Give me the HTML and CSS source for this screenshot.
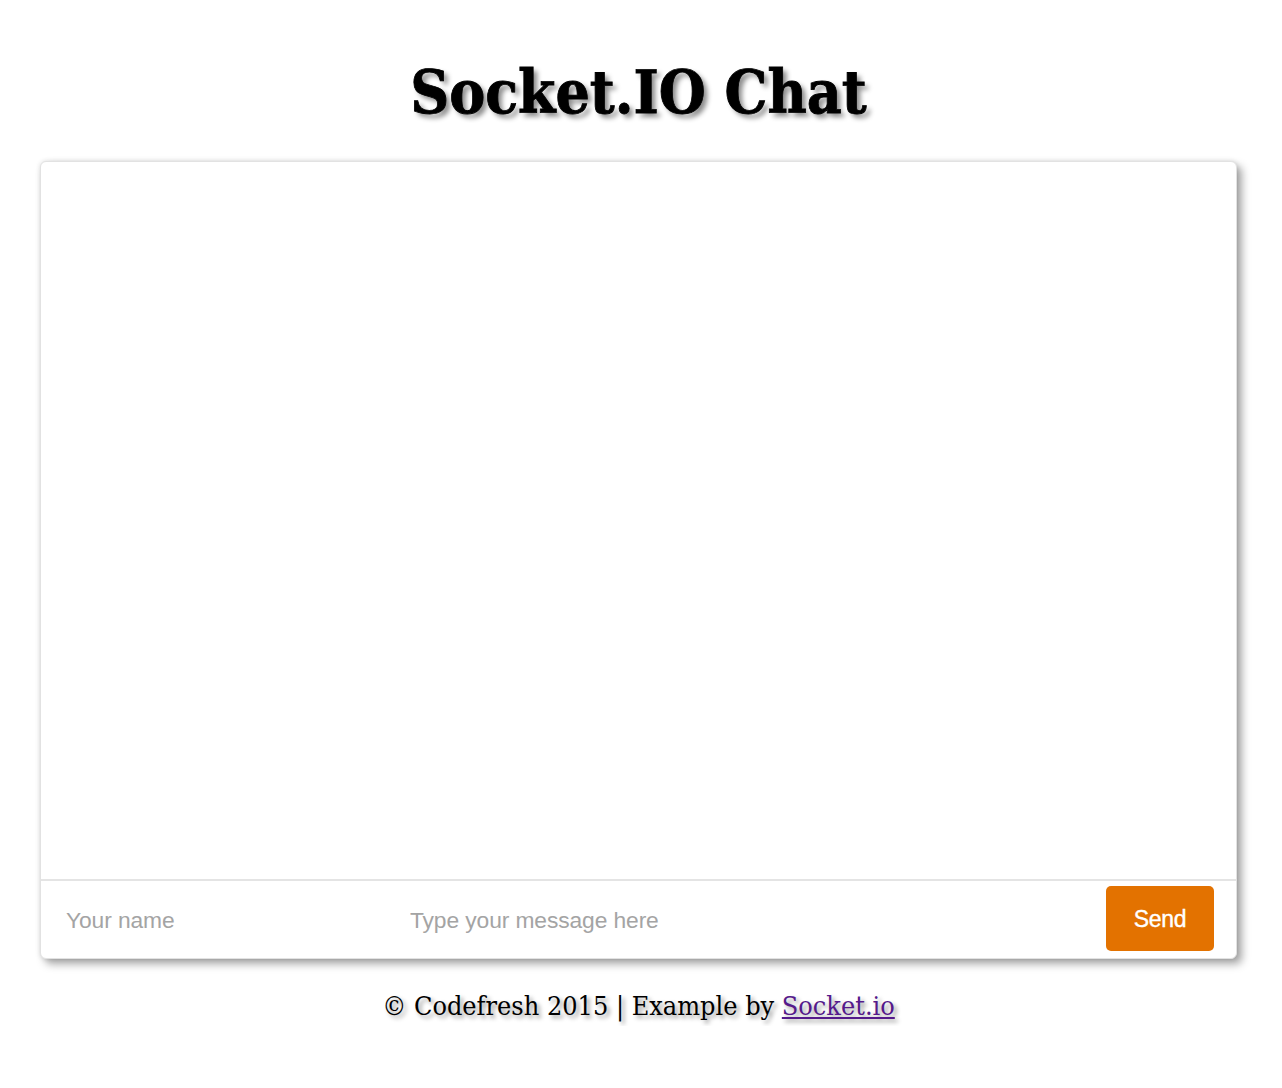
FILE: index.html
```html
<!DOCTYPE html>
<html>
<head>
<meta charset="utf-8">
<title>Socket.IO Chat</title>
<link rel="stylesheet" href="styles.css">
</head>
<body>
<h1 class="title">Socket.IO Chat</h1>
<div class="chat">
  <div class="messages"></div>
  <form class="composer">
    <input class="name" type="text" placeholder="Your name">
    <input class="message" type="text" placeholder="Type your message here">
    <button class="send" type="button">Send</button>
  </form>
</div>
<p class="footer">© Codefresh 2015 | Example by <a href="#">Socket.io</a></p>
</body>
</html>
```
FILE: styles.css
```css
html, body {
  margin: 0;
  padding: 0;
  background: #fff;
}
body {
  padding: 0 45px 0 40px;
  font-family: "Liberation Sans", Arial, sans-serif;
}
.title {
  margin: 0;
  padding-top: 60px;
  height: 105px;
  box-sizing: border-box;
  text-align: center;
  font-family: "DejaVu Serif Condensed", "DejaVu Serif", serif;
  font-weight: bold;
  font-size: 60px;
  line-height: 64px;
  color: #000;
  -webkit-text-stroke: 0.8px #000;
  text-shadow: 4px 4px 5px rgba(0,0,0,0.45);
}
.chat {
  margin-top: 56px;
  height: 798px;
  border: 1px solid #e2e2e2;
  border-radius: 6px;
  box-shadow: 0 0 5px rgba(0,0,0,0.12), 5px 5px 8px rgba(0,0,0,0.35);
  display: flex;
  flex-direction: column;
  box-sizing: border-box;
  background: #fff;
}
.messages {
  flex: 1;
}
.composer {
  margin: 0;
  height: 79px;
  border-top: 2px solid #e4e4e4;
  display: flex;
  align-items: center;
  padding: 0 22px 0 25px;
  box-sizing: border-box;
}
.composer input {
  border: none;
  outline: none;
  background: transparent;
  font-family: "Liberation Sans", Arial, sans-serif;
  font-size: 22.8px;
  color: #333;
  padding: 0;
  margin-top: 2px;
  letter-spacing: -0.1px;
}
.composer input::placeholder {
  color: #a4a4a4;
}
.name {
  width: 344px;
}
.message {
  flex: 1;
}
.send {
  width: 108px;
  height: 65px;
  margin-top: -2px;
  border: none;
  border-radius: 5px;
  background: #e37200;
  color: #fff;
  font-family: "Liberation Sans", Arial, sans-serif;
  font-size: 23px;
  -webkit-text-stroke: 0.4px #fff;
  letter-spacing: -0.3px;
  padding: 2px 0 0;
}
.footer {
  margin: 27px 0 0;
  text-align: center;
  font-family: "DejaVu Serif Condensed", "DejaVu Serif", serif;
  font-size: 26.8px;
  line-height: 40px;
  color: #000;
  text-shadow: 3px 3px 4px rgba(0,0,0,0.4);
}
.footer a {
  color: #551a8b;
}
```
